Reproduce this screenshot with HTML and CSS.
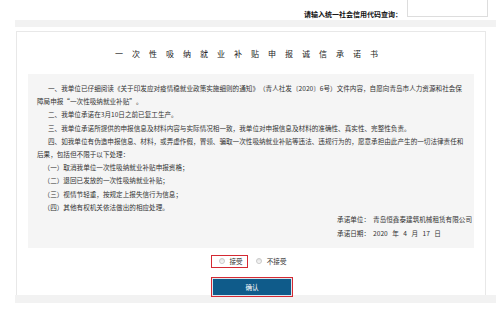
FILE: index.html
```html
<!DOCTYPE html>
<html lang="zh-CN">
<head>
    <meta charset="UTF-8">
    <meta name="viewport" content="width=device-width, initial-scale=1.0">
    <title>一次性吸纳就业补贴申报诚信承诺书</title>
    <link rel="stylesheet" href="styles.css">
</head>
<body>
    <div class="top">
        <span class="top-label">请输入统一社会信用代码查询：</span>
        <input class="top-input" type="text">
    </div>

    <div class="panel">
        <div class="card">
            <h1 class="title">一次性吸纳就业补贴申报诚信承诺书</h1>

            <div class="letter">
                <p>一、我单位已仔细阅读《关于印发应对疫情稳就业政策实施细则的通知》（青人社发〔2020〕6号）文件内容，自愿向青岛市人力资源和社会保障局申报“一次性吸纳就业补贴”。</p>
                <p>二、我单位承诺在3月10日之前已复工生产。</p>
                <p>三、我单位承诺所提供的申报信息及材料内容与实际情况相一致，我单位对申报信息及材料的准确性、真实性、完整性负责。</p>
                <p>四、如我单位有伪造申报信息、材料，或弄虚作假，冒领、骗取一次性吸纳就业补贴等违法、违规行为的，愿意承担由此产生的一切法律责任和后果，包括但不限于以下处理：</p>
                <p class="item">（一）取消我单位一次性吸纳就业补贴申报资格；</p>
                <p class="item">（二）退回已发放的一次性吸纳就业补贴；</p>
                <p class="item">（三）视情节轻重，按规定上报失信行为信息；</p>
                <p class="item">（四）其他有权机关依法做出的相应处理。</p>

                <div class="sign">
                    <div><span class="sign-label">承诺单位：</span>青岛恒鑫泰建筑机械租赁有限公司</div>
                    <div><span class="sign-label">承诺日期：</span><span class="date">2020 年 4 月 17 日</span></div>
                </div>
            </div>

            <div class="choice">
                <label class="opt opt-on"><input type="radio" name="agree">接受</label>
                <label class="opt"><input type="radio" name="agree">不接受</label>
            </div>

            <div class="actions">
                <button class="btn">确认</button>
            </div>
        </div>
    </div>
</body>
</html>
```

FILE: styles.css
```css
body {
    margin: 0;
    font-family: "Noto Sans CJK SC", "Liberation Sans", sans-serif;
    color: #333;
    background: #fff;
}

.top {
    height: 20px;
    box-sizing: border-box;
    display: flex;
    justify-content: flex-end;
    align-items: flex-end;
    padding: 0 8px 3px 0;
}

.top-label {
    font-size: 7px;
    line-height: 8px;
    font-weight: bold;
    color: #111;
    margin: 0 5px -1px 0;
}

.top-input {
    width: 81px;
    height: 24px;
    box-sizing: border-box;
    padding: 0;
    border: 1px solid #ddd;
    background: #fff;
}

.panel {
    margin-left: 15px;
    border-top: 7px solid #f2f2f2;
    border-bottom: 8px solid #f2f2f2;
    padding: 4px 10px 0 1px;
}

.card {
    border: 1px solid #e8e8e8;
    border-bottom: none;
    padding: 15px 11px 0;
}

.title {
    margin: 0;
    font-size: 8px;
    line-height: 14px;
    font-weight: normal;
    letter-spacing: 9px;
    text-align: center;
    color: #222;
}

.letter {
    margin-top: 13px;
    background: #f5f5f5;
    padding: 8px 2px 8px 9px;
    font-size: 6.6px;
    line-height: 13.2px;
    text-spacing-trim: space-all;
}

.letter p {
    margin: 0;
    padding-right: 6.5px;
    text-indent: 11px;
}

.letter .item {
    text-indent: 6.6px;
}

.sign {
    width: fit-content;
    margin: -2px 0 0 auto;
    line-height: 14px;
}

.sign-label {
    display: inline-block;
    width: 36px;
}

.date {
    word-spacing: 3px;
}

.choice {
    display: flex;
    justify-content: center;
    margin-top: 7px;
    font-size: 6.6px;
    line-height: 11px;
}

.opt {
    display: flex;
    align-items: center;
    padding: 0 4px 0 7px;
    border: 1px solid transparent;
}

.opt-on {
    border-color: #d42a33;
}

.opt input {
    appearance: none;
    width: 6px;
    height: 6px;
    box-sizing: border-box;
    margin: 0 5px 2px 0;
    border: 1px solid #c8c8c8;
    border-radius: 50%;
    background: linear-gradient(#e2e2e2, #fafafa);
}

.actions {
    display: flex;
    justify-content: center;
    margin-top: 9px;
}

.btn {
    width: 82px;
    height: 20px;
    margin: 0 0 -2px 2px;
    padding: 0;
    border: 1px solid #d42a33;
    background: #0f5b8a;
    box-shadow: inset 0 0 0 1px #dbe5ee;
    color: #fff;
    font-family: inherit;
    font-size: 6.6px;
}
```
